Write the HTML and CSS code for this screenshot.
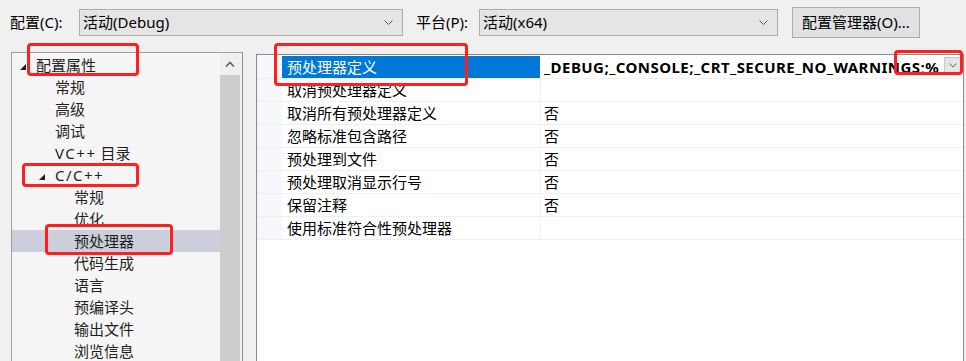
FILE: index.html
```html
<!DOCTYPE html>
<html lang="zh-CN">
<head>
<meta charset="utf-8">
<title>属性页</title>
<link rel="stylesheet" href="styles.css">
</head>
<body>
<div class="topbar">
  <span class="lbl">配置(C):</span>
  <div class="combo combo-config"><span>活动(Debug)</span><svg class="chev" width="9" height="5" viewBox="0 0 9 5"><path d="M0.5 0.5 L4.5 4.5 L8.5 0.5" fill="none" stroke="#555" stroke-width="1"/></svg></div>
  <span class="lbl lbl-plat">平台(P):</span>
  <div class="combo combo-plat"><span>活动(x64)</span><svg class="chev" width="9" height="5" viewBox="0 0 9 5"><path d="M0.5 0.5 L4.5 4.5 L8.5 0.5" fill="none" stroke="#555" stroke-width="1"/></svg></div>
  <div class="btn">配置管理器(O)...</div>
</div>
<div class="main">
  <div class="tree">
    <div class="tree-list">
      <div class="node l0"><span class="tog"><svg width="6" height="6" viewBox="0 0 6 6"><polygon points="6,0 6,6 0,6" fill="#1e1e1e"/></svg></span>配置属性</div>
      <div class="node l1"><span class="tog"></span>常规</div>
      <div class="node l1"><span class="tog"></span>高级</div>
      <div class="node l1"><span class="tog"></span>调试</div>
      <div class="node l1"><span class="tog"></span><span class="latin">VC++</span>&nbsp;目录</div>
      <div class="node l1"><span class="tog"><svg width="6" height="6" viewBox="0 0 6 6"><polygon points="6,0 6,6 0,6" fill="#1e1e1e"/></svg></span><span class="latin">C/C++</span></div>
      <div class="node l2"><span class="tog"></span>常规</div>
      <div class="node l2"><span class="tog"></span>优化</div>
      <div class="node l2 sel"><span class="tog"></span>预处理器</div>
      <div class="node l2"><span class="tog"></span>代码生成</div>
      <div class="node l2"><span class="tog"></span>语言</div>
      <div class="node l2"><span class="tog"></span>预编译头</div>
      <div class="node l2"><span class="tog"></span>输出文件</div>
      <div class="node l2"><span class="tog"></span>浏览信息</div>
    </div>
    <div class="vscroll">
      <div class="sb-up"><svg width="10" height="6" viewBox="0 0 10 6"><path d="M1 5.5 L5 1.5 L9 5.5" fill="none" stroke="#606060" stroke-width="1.6"/></svg></div>
      <div class="sb-thumb"></div>
    </div>
    <div class="tree-gap"></div>
  </div>
  <div class="grid">
    <div class="grid-rows">
      <div class="prow active"><div class="margin"></div><div class="pname">预处理器定义</div><div class="pval bold"><span class="valtext">_DEBUG;_CONSOLE;_CRT_SECURE_NO_WARNINGS;%</span><span class="dd"><svg width="8" height="5" viewBox="0 0 8 5"><path d="M0.5 0.5 L4 4 L7.5 0.5" fill="none" stroke="#666" stroke-width="1"/></svg></span></div></div>
      <div class="prow"><div class="margin"></div><div class="pname">取消预处理器定义</div><div class="pval"></div></div>
      <div class="prow"><div class="margin"></div><div class="pname">取消所有预处理器定义</div><div class="pval">否</div></div>
      <div class="prow"><div class="margin"></div><div class="pname">忽略标准包含路径</div><div class="pval">否</div></div>
      <div class="prow"><div class="margin"></div><div class="pname">预处理到文件</div><div class="pval">否</div></div>
      <div class="prow"><div class="margin"></div><div class="pname">预处理取消显示行号</div><div class="pval">否</div></div>
      <div class="prow"><div class="margin"></div><div class="pname">保留注释</div><div class="pval">否</div></div>
      <div class="prow"><div class="margin"></div><div class="pname">使用标准符合性预处理器</div><div class="pval"></div></div>
    </div>
  </div>
</div>
<div class="mark mark-root"></div>
<div class="mark mark-cpp"></div>
<div class="mark mark-pre"></div>
<div class="mark mark-def"></div>
<div class="mark mark-dd"></div>
</body>
</html>
```
FILE: styles.css
```css
html, body {
  margin: 0;
  padding: 0;
}
body {
  width: 966px;
  height: 361px;
  overflow: hidden;
  background: #f0f0f0;
  font-family: "Noto Sans", "Noto Sans CJK SC", sans-serif;
  font-size: 15px;
  color: #000;
  position: relative;
}
.topbar {
  height: 44px;
  display: flex;
  align-items: center;
  padding-left: 10px;
}
.lbl {
  width: 69px;
  line-height: 20px;
}
.lbl-plat {
  margin-left: 13px;
  width: 63px;
}
.combo {
  box-sizing: border-box;
  height: 27px;
  background: #e5e5e5;
  border: 1px solid #adadad;
  display: flex;
  align-items: center;
  justify-content: space-between;
  padding: 0 9px 0 3px;
  line-height: 20px;
}
.combo-config { width: 324px; }
.combo-plat { width: 299px; }
.chev { display: block; }
.btn {
  box-sizing: border-box;
  margin-left: 14px;
  width: 128px;
  height: 31px;
  background: #e1e1e1;
  border: 1px solid #adadad;
  display: flex;
  align-items: center;
  justify-content: center;
  line-height: 20px;
}
.main {
  display: flex;
  align-items: flex-start;
  margin-top: 8px;
  padding-left: 11px;
}
.tree {
  box-sizing: border-box;
  width: 232px;
  height: 309px;
  border: 1px solid #a0a0a0;
  border-right-color: #8c8ca4;
  border-bottom: none;
  background: #f5f5f5;
  display: flex;
}
.tree-list {
  width: 208px;
  padding-top: 1px;
}
.node {
  height: 22px;
  line-height: 22px;
  display: flex;
  align-items: center;
  color: #1e1e1e;
  white-space: nowrap;
}
.latin { letter-spacing: 1.5px; }
.node.l0 { padding-left: 8px; }
.node.l1 { padding-left: 27px; }
.node.l2 { padding-left: 46px; }
.node.sel { background: #cccedb; }
.tog {
  width: 16px;
  flex: none;
  display: flex;
  align-items: center;
  padding-top: 3px;
}
.tog svg { display: block; }
.vscroll {
  width: 20px;
  background: #f0f0f0;
  display: flex;
  flex-direction: column;
}
.sb-up {
  height: 22px;
  display: flex;
  align-items: center;
  justify-content: center;
}
.sb-up svg { display: block; }
.sb-thumb {
  flex: 1;
  background: #cdcdcd;
}
.tree-gap {
  width: 2px;
  background: #f0f0f0;
}
.grid {
  box-sizing: border-box;
  margin-top: 2px;
  margin-left: 13px;
  width: 708px;
  height: 307px;
  border: 1px solid #8a8a8a;
  border-bottom: none;
  background: #fff;
  padding-top: 1px;
}
.prow {
  box-sizing: border-box;
  display: flex;
  height: 23px;
  border-bottom: 1px solid #f0f0f0;
  line-height: 22px;
}
.margin {
  width: 25px;
  flex: none;
  background: #f6f8fc;
}
.pname {
  width: 259px;
  flex: none;
  box-sizing: border-box;
  padding-left: 5px;
  border-right: 1px solid #f0f0f0;
  white-space: nowrap;
  color: #000;
}
.prow.active .pname {
  background: #0078d7;
  color: #fff;
  border-right-color: #fff;
}
.pval {
  flex: 1;
  min-width: 0;
  padding-left: 3px;
  display: flex;
  align-items: flex-start;
  white-space: nowrap;
}
.pval.bold { font-weight: 700; }
.valtext {
  width: 399px;
  flex: none;
  letter-spacing: 0.45px;
}
.dd {
  box-sizing: border-box;
  width: 17px;
  height: 17px;
  margin-top: 1px;
  margin-left: 1px;
  background: #e6e6e6;
  border: 1px solid #c8c8c8;
  display: flex;
  align-items: center;
  justify-content: center;
}
.dd svg { display: block; }
.mark {
  position: absolute;
  box-sizing: border-box;
  border: 3px solid #ff1f1f;
  border-radius: 4px;
}
.mark-root { left: 27px; top: 43px; width: 112px; height: 33px; }
.mark-cpp { left: 22px; top: 163px; width: 117px; height: 24px; }
.mark-pre { left: 45px; top: 224px; width: 128px; height: 31px; }
.mark-def { left: 274px; top: 43px; width: 194px; height: 43px; }
.mark-dd { left: 894px; top: 50px; width: 69px; height: 25px; }
```
